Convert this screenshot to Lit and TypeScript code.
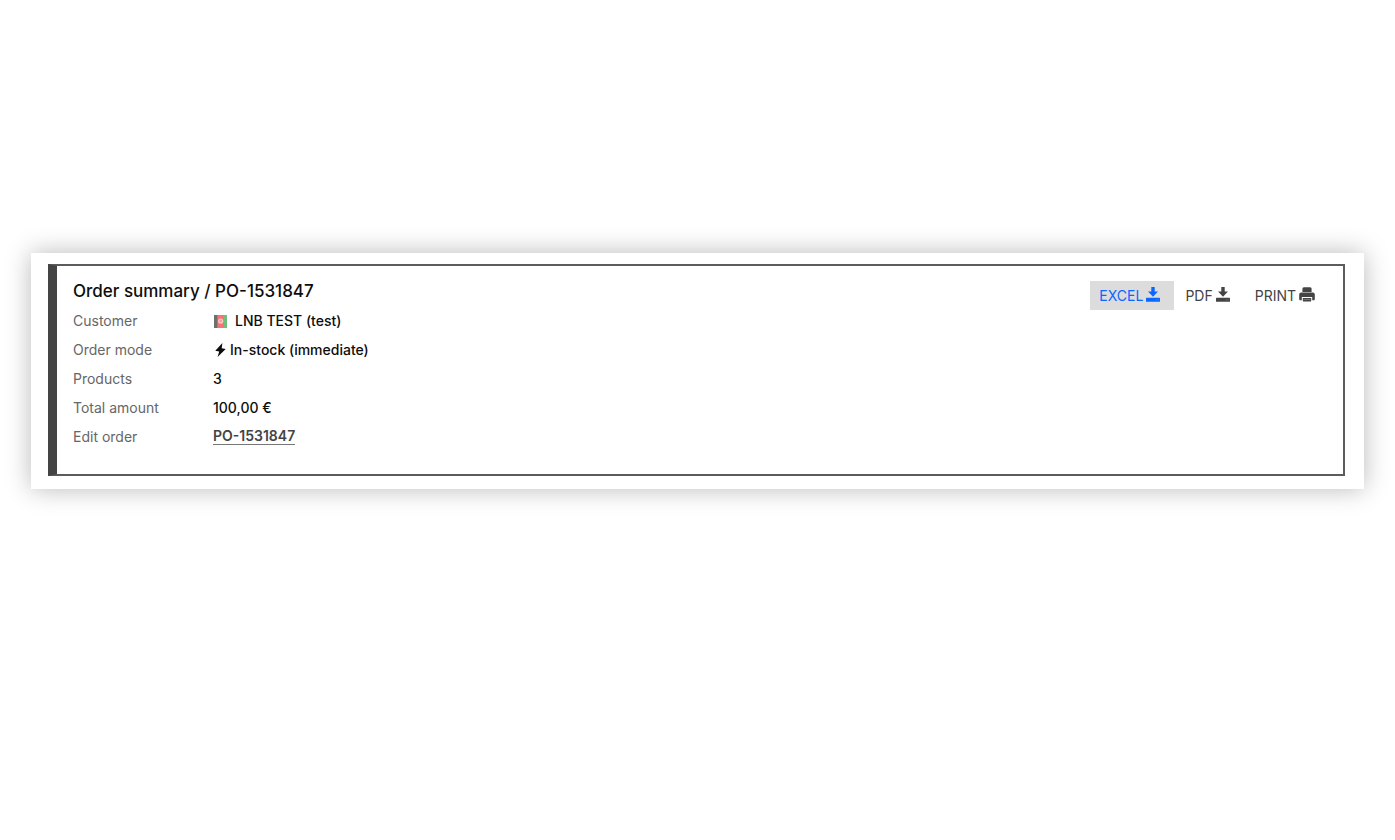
import { LitElement, html, css, svg } from "lit";
import { customElement, state } from "lit/decorators.js";

const downloadIcon = html`<svg class="icon download" viewBox="0 0 14 15" aria-hidden="true">
  ${svg`<path fill="currentColor" d="M5.3 0h3.4v4.6h3.3L7 9.8 2 4.6h3.3z"/>
  <path fill="currentColor" d="M.6 10.8h12.8q.6 0 .6.6v2.8q0 .6-.6.6H.6q-.6 0-.6-.6v-2.8q0-.6.6-.6z"/>
  <path fill="#fff" opacity=".35" d="M11.6 12.5h1v.8h-1zM9.6 12.5h1v.8h-1z"/>`}
</svg>`;

const printIcon = html`<svg class="icon print" viewBox="0 0 16 15" aria-hidden="true">
  ${svg`<path fill="currentColor" d="M4.9.2h6.2Q12.6.2 12.6 1.7V5H3.4V1.7Q3.4.2 4.9.2z"/>
  <path fill="currentColor" d="M2.2 5.6h11.6q2 0 2 2v4.6q0 1-1 1h-1.6V10H2.8v3.2H1.2q-1 0-1-1V7.6q0-2 2-2z"/>
  <path fill="currentColor" d="M3.8 11h8.4v2.4q0 1.2-1.2 1.2H5q-1.2 0-1.2-1.2z"/>
  <path fill="#fff" opacity=".45" d="M4.4 12.2h7.2v.6H4.4z"/>`}
</svg>`;

const boltIcon = html`<svg class="bolt" viewBox="0 0 11 14" aria-hidden="true">
  ${svg`<path fill="currentColor" d="M7.4 0 .3 7.8l3.9.6L2.6 14l8.1-8.1-4-.6z"/>`}
</svg>`;

const flagIcon = html`<svg class="flag" viewBox="0 0 13 13" role="img" aria-label="Afghanistan">
  ${svg`<path fill="#6e6e6e" d="M0 0h4v13H0z"/>
  <path fill="#f77373" d="M3.4 0h6.6v13H3.4z"/>
  <path fill="#72bd7c" d="M10 0h3v13h-3z"/>
  <circle cx="6.7" cy="6" r="2" fill="#f99a9a" stroke="#fcd0d0" stroke-width="1.1"/>`}
</svg>`;

@customElement("app-root")
export class AppRoot extends LitElement {
  @state() private active = "EXCEL";

  private actions = [
    { label: "EXCEL", icon: downloadIcon },
    { label: "PDF", icon: downloadIcon },
    { label: "PRINT", icon: printIcon },
  ];

  static styles = css`
    :host {
      display: block;
      box-sizing: border-box;
      min-height: 100vh;
      padding: 253px 31px 32px;
      background: #fff;
      color: #0d0d0d;
      font: 500 14px/29px Inter, "Liberation Sans", sans-serif;
    }
    .card {
      padding: 11px 19px 13px 17px;
      background: #fff;
      box-shadow: 0 0 24px rgba(0, 0, 0, 0.28);
    }
    .panel {
      display: flex;
      justify-content: space-between;
      align-items: flex-start;
      gap: 24px;
      padding: 10px 14px 23px 16px;
      border: 2px solid #5c5c5c;
      border-left: 9px solid #444;
    }
    h1 {
      margin: 0;
      font-size: 17px;
      font-weight: 500;
      line-height: 30px;
    }
    dl {
      display: grid;
      grid-template-columns: 140px auto;
      margin: 0;
    }
    dt {
      color: #666;
      font-weight: 400;
    }
    dd {
      display: flex;
      align-items: center;
      margin: 0;
    }
    .flag {
      width: 13px;
      height: 13px;
      margin: 2px 8px 0 1px;
    }
    .bolt {
      width: 11px;
      height: 14px;
      margin: 0 4px 0 2px;
    }
    .order-link {
      color: #444;
      font-weight: 600;
      line-height: 16px;
      text-decoration: none;
      border-bottom: 1px solid #777;
    }
    .actions {
      display: flex;
      gap: 2px;
      padding-top: 5px;
    }
    button {
      display: flex;
      align-items: center;
      gap: 3px;
      height: 29px;
      padding: 0 14px 0 9px;
      border: 0;
      background: none;
      color: #444;
      font: 400 14px/29px Inter, "Liberation Sans", sans-serif;
      cursor: pointer;
    }
    .selected {
      background: #dcdcdc;
      color: #0a66ff;
    }
    .icon {
      height: 15px;
      margin-bottom: 2px;
    }
    .download {
      width: 14px;
    }
    .print {
      width: 16px;
    }
  `;

  render() {
    return html`<main class="card">
      <section class="panel">
        <div>
          <h1>Order summary / PO-1531847</h1>
          <dl>
            <dt>Customer</dt>
            <dd>${flagIcon}LNB TEST (test)</dd>
            <dt>Order mode</dt>
            <dd>${boltIcon}In-stock (immediate)</dd>
            <dt>Products</dt>
            <dd>3</dd>
            <dt>Total amount</dt>
            <dd>100,00 €</dd>
            <dt>Edit order</dt>
            <dd><a class="order-link" href="#PO-1531847">PO-1531847</a></dd>
          </dl>
        </div>
        <div class="actions">
          ${this.actions.map(
            (a) => html`<button
              type="button"
              class=${a.label === this.active ? "selected" : ""}
              @click=${() => (this.active = a.label)}
            >${a.label}${a.icon}</button>`
          )}
        </div>
      </section>
    </main>`;
  }
}
